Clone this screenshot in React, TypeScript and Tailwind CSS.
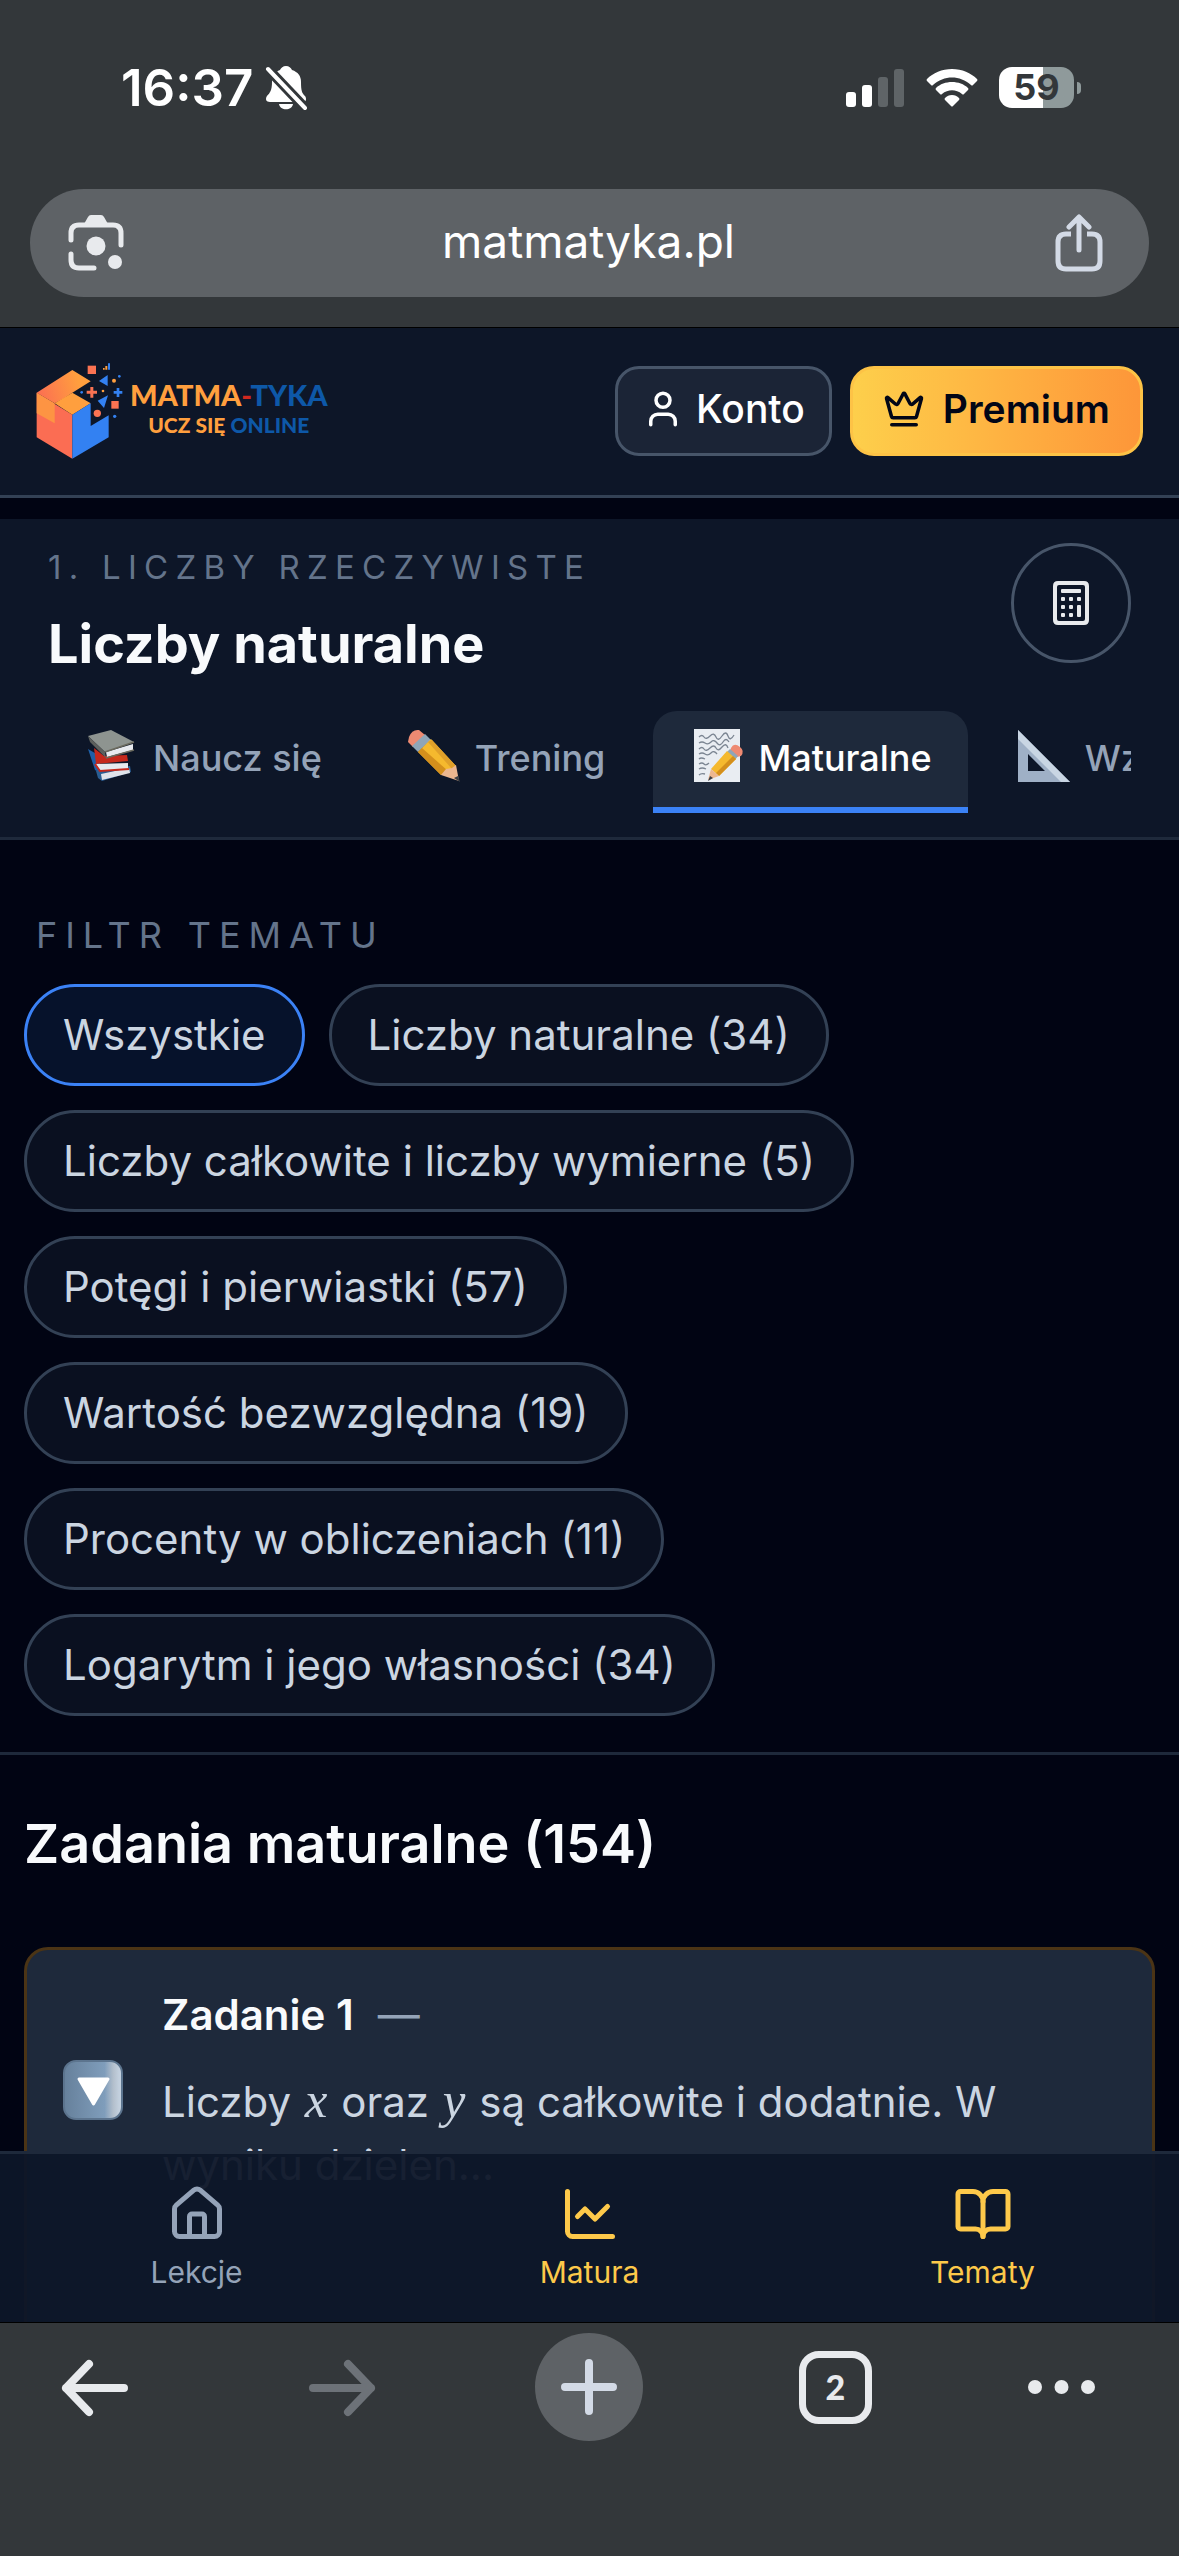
import { useState } from 'react';
import type { ReactNode } from 'react';
import { BookOpen, ChartLine, Crown, House, User } from 'lucide-react';

const FILTERS = [
  { label: 'Wszystkie' },
  { label: 'Liczby naturalne', count: 34 },
  { label: 'Liczby całkowite i liczby wymierne', count: 5 },
  { label: 'Potęgi i pierwiastki', count: 57 },
  { label: 'Wartość bezwzględna', count: 19 },
  { label: 'Procenty w obliczeniach', count: 11 },
  { label: 'Logarytm i jego własności', count: 34 },
];

const NAV_ITEMS = [
  { label: 'Lekcje', icon: House, highlighted: false },
  { label: 'Matura', icon: ChartLine, highlighted: true },
  { label: 'Tematy', icon: BookOpen, highlighted: true },
];

function BooksIcon() {
  return (
    <svg width="56" height="60" viewBox="0 0 56 60" aria-hidden="true" className="shrink-0">
      <path d="M4 21L16 28V45L11 42Z" fill="#1d5fa8" />
      <path d="M12 43L46 38L47 44L18 53L14 50Z" fill="#2a5d92" />
      <path d="M17 46L45 40L46 45L18 52Z" fill="#dfe3ea" />
      <path d="M10 20L20 28L43 27L44 33L12 36Z" fill="#c5281c" />
      <path d="M12 36L44 35V41L16 43Z" fill="#e6e9ee" />
      <path d="M11 36L16 43L45 41" stroke="#c5281c" strokeWidth="2" fill="none" />
      <path d="M4 8L27 2L50 14L21 24Z" fill="#8e9490" />
      <path d="M4 8L21 24L22 30L6 14Z" fill="#5d605d" />
      <path d="M22 24L49 16V22L23 29Z" fill="#e8eaee" />
      <path d="M21 24L50 14M22 30L50 22" stroke="#6b6a5e" strokeWidth="1.5" />
    </svg>
  );
}

function PencilIcon() {
  return (
    <svg width="56" height="60" viewBox="0 0 56 60" aria-hidden="true" className="shrink-0">
      <path d="M3 9Q6 1 13 2L19 7L7 19L2 14Z" fill="#ee8a72" />
      <path d="M19 6L25 12L12 24L6 18Z" fill="#8fa5b8" />
      <path d="M25 11L50 38L35 47L12 24Z" fill="#f5b92e" />
      <path d="M12 24L16 20L42 43L35 47Z" fill="#d48f1c" />
      <path d="M22 14L26 12L50 38L46 41Z" fill="#e0a02a" />
      <path d="M35 47L40 41L46 40L50 37L53 53Z" fill="#ecb790" />
      <path d="M48 50L52 48L54 54Z" fill="#3b3f45" />
    </svg>
  );
}

function MemoIcon() {
  return (
    <svg width="56" height="60" viewBox="0 0 56 60" aria-hidden="true" className="shrink-0">
      <rect x="5" y="1" width="46" height="53" fill="#e9edf2" />
      <path
        d="M10 9q3-3 5 0t6-1 6 1 6-1 6 0 6-1M10 15q3-2 6 0t6-1 6 1 6-1 6 0M10 21q3-3 5 0t6-1 6 0 6-1 6 1M10 26q3-2 6 0t6-1 6 1M10 31q2-2 6 0M10 36q3-2 5 0t5-1M10 41q3-2 7 0M10 47q2-2 6-1"
        stroke="#7b8592"
        strokeWidth="1.3"
        fill="none"
      />
      <path d="M42 20Q45 14 51 19Q56 23 52 28L48 29L41 23Z" fill="#ee8a72" />
      <path d="M41 21L49 28L46 32L38 24Z" fill="#8fa5b8" />
      <path d="M38 23L47 31L30 48L22 41Z" fill="#f5b92e" />
      <path d="M44 28L47 31L30 48L27 45Z" fill="#d48f1c" />
      <path d="M22 41L30 48L19 52Z" fill="#ecb790" />
      <path d="M21 48L24 50L19 53Z" fill="#3b3f45" />
    </svg>
  );
}

function SetSquareIcon() {
  return (
    <svg width="56" height="60" viewBox="0 0 56 60" aria-hidden="true" className="shrink-0">
      <path d="M2 2L54 54H2ZM12 26V43H29Z" fill="#9fb0c6" fillRule="evenodd" />
      <path d="M2 2L54 54H45L2 11Z" fill="#c9d6e4" />
    </svg>
  );
}

const TABS = [
  { label: 'Naucz się', icon: <BooksIcon /> },
  { label: 'Trening', icon: <PencilIcon /> },
  { label: 'Maturalne', icon: <MemoIcon /> },
  { label: 'Wzory', icon: <SetSquareIcon /> },
];

function StatusBar() {
  return (
    <div className="mb-[70px] flex h-[63px] items-center justify-between pr-[98px] pl-[121px] text-white">
      <div className="flex items-center gap-3">
        <span className="text-[51px] leading-[63px] font-semibold">16:37</span>
        <svg width="42" height="46" viewBox="0 0 42 46" fill="currentColor" aria-label="Wyciszony">
          <path d="M21 1c3 0 5 2 6 4 6 2 9 6 9 12 0 9 1 11 4 14 2 3 1 6-2 6H5c-4 0-5-3-3-6 3-3 5-6 5-14 0-6 3-10 8-12 1-2 3-4 6-4Z" />
          <path d="M14 39h14c-1 7-13 7-14 0Z" />
          <path d="M3 4L40 43" stroke="#33373a" strokeWidth="10" />
          <path d="M3 4L40 43" stroke="currentColor" strokeWidth="4" strokeLinecap="round" />
        </svg>
      </div>
      <div className="flex items-center">
        <svg width="58" height="38" viewBox="0 0 58 38" aria-label="Zasięg" className="mr-[22px]">
          <rect x="0" y="23" width="10" height="15" rx="3" fill="#fff" />
          <rect x="16" y="16" width="10" height="22" rx="3" fill="#fff" />
          <rect x="32" y="8" width="10" height="30" rx="3" fill="#5f6467" />
          <rect x="48" y="0" width="10" height="38" rx="3" fill="#5f6467" />
        </svg>
        <svg width="52" height="38" viewBox="0 0 52 38" fill="#fff" aria-label="Wi-Fi" className="mr-[21px]">
          <path d="M26 0C36 0 45 4 51 10Q52 11 51 12L47 16Q46 17 45 16C34 6 18 6 7 16Q6 17 5 16L1 12Q0 11 1 10C7 4 16 0 26 0Z" />
          <path d="M26 13C32 13 38 15 42 19Q43 20 42 21L38 25Q37 26 36 25C30 20 22 20 16 25Q15 26 14 25L10 21Q9 20 10 19C14 15 20 13 26 13Z" />
          <path d="M26 26C29 26 31 27 33 29Q34 30 33 31L27 37Q26 38 25 37L19 31Q18 30 19 29C21 27 23 26 26 26Z" />
        </svg>
        <span className="flex h-[41px] w-[75px] items-center justify-center rounded-[13px] bg-linear-to-r from-white from-59% to-[#8f9a9b] to-59% text-[36px] leading-[41px] font-bold text-[#33373a]">
          59
        </span>
        <span className="ml-[3px] h-3 w-1 rounded-r-full bg-[#8f9a9b]" />
      </div>
    </div>
  );
}

function AddressBar() {
  return (
    <div className="mx-[30px] flex h-[108px] items-center justify-between rounded-full bg-[#5e6266] px-[38px]">
      <button type="button" aria-label="Szukaj obrazem">
        <svg width="56" height="56" viewBox="0 0 56 56" fill="none" stroke="#e8eaed" strokeWidth="5" strokeLinecap="round">
          <path d="M3 25V18Q3 10 11 10H45Q53 10 53 18V30M3 39V45Q3 53 11 53H26" />
          <path d="M16 9L20 2Q21 0 23 0H33Q35 0 36 2L40 9Z" fill="#e8eaed" stroke="none" />
          <circle cx="28" cy="31" r="9.500" fill="#e8eaed" stroke="none" />
          <circle cx="47" cy="47" r="7" fill="#e8eaed" stroke="none" />
        </svg>
      </button>
      <span className="pb-1 text-[46px] leading-[60px] text-white">matmatyka.pl</span>
      <button type="button" aria-label="Udostępnij" className="mr-1.5">
        <svg width="52" height="58" viewBox="0 0 52 58" fill="none" stroke="#d3dae6" strokeWidth="5" strokeLinecap="round" strokeLinejoin="round">
          <path d="M18 20H13Q5 20 5 28V47Q5 55 13 55H39Q47 55 47 47V28Q47 20 39 20H34" strokeLinecap="butt" />
          <path d="M26 36V4M16 13L26 3L36 13" />
        </svg>
      </button>
    </div>
  );
}

function Logo() {
  return (
    <a href="/" className="flex items-center pb-1">
      <svg width="100" height="110" viewBox="30 15 300 330" aria-hidden="true">
        <defs>
          <linearGradient id="logo-top" x1="0" y1="0.600" x2="1" y2="0.400">
            <stop offset="0" stopColor="#fb6f52" />
            <stop offset="0.800" stopColor="#ff9f3e" />
          </linearGradient>
        </defs>
        <path d="M50 128L157 60L212 94L157 128L130 146L104 160Z" fill="url(#logo-top)" />
        <path d="M50 128L157 194V326L50 262Z" fill="#fb6d53" />
        <path d="M50 128L104 160V220L50 190Z" fill="#fd9443" />
        <path d="M104 160L157 128L212 160L157 194Z" fill="#ff9f3e" />
        <path d="M157 194L212 160V228L266 196V262L157 326Z" fill="#3381f2" />
        <g fill="#fb7352">
          <rect x="203" y="47" width="25" height="25" />
          <rect x="274" y="153" width="22" height="23" />
          <path d="M211 111h9v11h11v9h-11v12h-9v-12h-11v-9h11Z" />
          <circle cx="232" cy="190" r="11" />
        </g>
        <g fill="#3381f2">
          <path d="M237 93L263 75V108ZM233 152L264 136L252 174Z" />
          <path d="M290 114h8v9h9v8h-9v10h-8v-10h-9v-8h9Z" />
          <circle cx="185" cy="127" r="4" />
          <circle cx="284" cy="199" r="5" />
          <circle cx="298" cy="79" r="4" />
          <path d="M264 40h6v19h-6Z" />
        </g>
        <g fill="#ff9f3e">
          <circle cx="282" cy="92" r="6" />
          <circle cx="249" cy="123" r="4" />
          <path d="M256 48h6v11h-6ZM249 54h5v5h-5Z" />
        </g>
      </svg>
      <span className="flex flex-col items-center font-[Lato,sans-serif] leading-[30px] font-black text-[#ff9f3e]">
        <span className="text-[29px]">
          MATMA<span className="text-[#d0281f]">-</span>
          <span className="text-[#0d58a8]">TYKA</span>
        </span>
        <span className="text-[21px]">
          UCZ SIĘ <span className="text-[#0d58a8]">ONLINE</span>
        </span>
      </span>
    </a>
  );
}

function SiteHeader() {
  return (
    <header className="flex h-[170px] items-center justify-between border-b-[3px] border-[#334155] bg-[#0d1628] pr-9 pl-[30px]">
      <Logo />
      <div className="flex gap-[18px] pb-0.5 text-[39px] leading-[54px]">
        <button
          type="button"
          className="flex h-[90px] items-center gap-3 rounded-3xl border-[3px] border-[#475569] bg-[#1b2436] px-6 pb-[3px] font-medium text-white"
        >
          <User size={42} />
          Konto
        </button>
        <button
          type="button"
          className="flex h-[90px] items-center gap-[18px] rounded-3xl border-[3px] border-[#fdc346] bg-linear-to-r from-[#fdcf4b] to-[#fd9639] px-[30px] pb-[3px] font-semibold text-[#020617]"
        >
          <Crown size={42} />
          Premium
        </button>
      </div>
    </header>
  );
}

function CalculatorButton() {
  return (
    <button
      type="button"
      aria-label="Kalkulator"
      className="flex size-[120px] shrink-0 items-center justify-center rounded-full border-[3px] border-[#475569]"
    >
      <svg width="36" height="44" viewBox="0 0 36 44" fill="#e8eaed">
        <path d="M5 0H31Q36 0 36 5V39Q36 44 31 44H5Q0 44 0 39V5Q0 0 5 0ZM4 6V38Q4 40 6 40H30Q32 40 32 38V6Q32 4 30 4H6Q4 4 4 6Z" fillRule="evenodd" />
        <rect x="8" y="8" width="20" height="4" rx="1" />
        {[16, 24, 32].map((y) => (
          <g key={y}>
            <rect x="8" y={y} width="4" height="4" rx="1" />
            <rect x="16" y={y} width="4" height="4" rx="1" />
          </g>
        ))}
        <rect x="24" y="16" width="4" height="4" rx="1" />
        <rect x="24" y="24" width="4" height="12" rx="1" />
      </svg>
    </button>
  );
}

function LessonHeader() {
  const [activeTab, setActiveTab] = useState('Maturalne');

  return (
    <section className="mt-[21px] border-b-[3px] border-[#1e293b] bg-[#0d1628] px-12 py-6">
      <div className="flex items-start justify-between">
        <div>
          <p className="text-[33px] leading-[48px] tracking-[0.22em] text-[#64748b] uppercase">
            1. Liczby rzeczywiste
          </p>
          <h1 className="mt-3 text-[54px] leading-[81px] font-bold text-[#f8fafc]">Liczby naturalne</h1>
        </div>
        <CalculatorButton />
      </div>
      <div className="mt-[27px] flex gap-3 overflow-hidden">
        {TABS.map((tab) => (
          <button
            key={tab.label}
            type="button"
            onClick={() => setActiveTab(tab.label)}
            className={`flex h-[102px] shrink-0 items-center gap-[13px] rounded-t-3xl border-b-[6px] px-9 pb-0.5 text-[36px] leading-[54px] font-medium ${
              activeTab === tab.label
                ? 'border-[#3b82f6] bg-[#1e293b] text-white'
                : 'border-transparent text-[#94a3b8]'
            }`}
          >
            {tab.icon}
            {tab.label}
          </button>
        ))}
      </div>
    </section>
  );
}

function TopicFilter() {
  const [selected, setSelected] = useState('Wszystkie');

  return (
    <section className="border-b-[3px] border-[#1e293b] px-6 pt-[68px] pb-9">
      <h2 className="mb-[22px] pl-3 text-[36px] leading-[54px] tracking-[0.22em] text-[#64748b] uppercase">
        Filtr tematu
      </h2>
      <div className="flex flex-wrap gap-6">
        {FILTERS.map(({ label, count }) => (
          <button
            key={label}
            type="button"
            onClick={() => setSelected(label)}
            className={`h-[102px] rounded-full border-[3px] px-9 text-[42px] leading-[60px] text-[#cbd5e1] ${
              selected === label ? 'border-[#3b82f6] bg-[#06122b]' : 'border-[#334155] bg-[#0a1020]'
            }`}
          >
            {count ? `${label} (${count})` : label}
          </button>
        ))}
      </div>
    </section>
  );
}

function MathVar({ children }: { children: ReactNode }) {
  return (
    <i className="px-0.5 font-['Liberation_Serif',serif] text-[51px] leading-none">{children}</i>
  );
}

function TaskCard() {
  return (
    <article className="min-h-[420px] rounded-3xl border-[3px] border-[#4b3415] bg-[#1e293b]">
      <div className="flex items-center gap-[39px] px-9 pt-[33px] pb-[39px]">
        <button type="button" aria-label="Rozwiń zadanie" className="shrink-0">
          <svg width="60" height="60" viewBox="0 0 60 60">
            <defs>
              <linearGradient id="expand">
                <stop offset="0" stopColor="#66809b" />
                <stop offset="0.700" stopColor="#7f9dbb" />
                <stop offset="0.850" stopColor="#b3bfcc" />
                <stop offset="0.950" stopColor="#c3d0de" />
              </linearGradient>
            </defs>
            <rect x="1" y="1" width="58" height="58" rx="12" fill="url(#expand)" stroke="#5c748e" strokeWidth="2" />
            <path d="M16 19H45L30.500 44Z" fill="#fff" stroke="#fff" strokeWidth="3" strokeLinejoin="round" />
          </svg>
        </button>
        <div className="text-[42px] leading-[63px] text-[#cbd5e1]">
          <div className="flex gap-6">
            <h3 className="font-semibold text-[#f8fafc]">Zadanie 1</h3>
            <span className="text-[#94a3b8]">—</span>
          </div>
          <p className="mt-6">
            Liczby <MathVar>x</MathVar> oraz <MathVar>y</MathVar> są całkowite i dodatnie. W wyniku dzielen...
          </p>
        </div>
      </div>
    </article>
  );
}

function BottomNav() {
  return (
    <nav className="absolute inset-x-0 bottom-0 grid h-[171px] grid-cols-3 border-t-[3px] border-[#1e293b] bg-[#0d1628]/95">
      {NAV_ITEMS.map(({ label, icon: Icon, highlighted }) => (
        <a
          key={label}
          href="#"
          className={`flex flex-col items-center gap-1.5 pt-[30px] text-[30px] leading-[45px] ${
            highlighted ? 'text-[#fdc94a]' : 'text-[#94a3b8]'
          }`}
        >
          <Icon size={60} />
          {label}
        </a>
      ))}
    </nav>
  );
}

function BrowserToolbar() {
  return (
    <div className="flex h-[234px] shrink-0 items-start justify-between border-t border-black bg-[#33373a] pt-2.5 pr-[84px] pl-[41px] text-[#e8eaed]">
      <button type="button" aria-label="Wstecz" className="flex size-[108px] items-center justify-center">
        <svg width="68" height="62" viewBox="0 0 68 62" fill="none" stroke="currentColor" strokeWidth="8" strokeLinecap="round" strokeLinejoin="round">
          <path d="M63 32H5M28 8L5 32L28 56" />
        </svg>
      </button>
      <button type="button" aria-label="Dalej" disabled className="flex size-[108px] items-center justify-center text-[#6d7278]">
        <svg width="68" height="62" viewBox="0 0 68 62" fill="none" stroke="currentColor" strokeWidth="8" strokeLinecap="round" strokeLinejoin="round">
          <path d="M5 32H63M40 8L63 32L40 56" />
        </svg>
      </button>
      <button type="button" aria-label="Nowa karta" className="flex size-[108px] items-center justify-center rounded-full bg-[#5e6266]">
        <svg width="56" height="56" viewBox="0 0 56 56" stroke="#d3dae6" strokeWidth="8" strokeLinecap="round">
          <path d="M28 4V52M4 28H52" />
        </svg>
      </button>
      <button type="button" aria-label="Karty" className="flex size-[108px] items-center justify-center">
        <span className="flex size-[73px] items-center justify-center rounded-[20px] border-[7px] border-[#e8eaed] font-[Lato,sans-serif] text-[34px] leading-[40px] font-black">
          2
        </span>
      </button>
      <button type="button" aria-label="Więcej" className="flex h-[108px] items-center">
        <svg width="67" height="14" viewBox="0 0 67 14" fill="currentColor">
          <circle cx="7" cy="7" r="7" />
          <circle cx="33.500" cy="7" r="7" />
          <circle cx="60" cy="7" r="7" />
        </svg>
      </button>
    </div>
  );
}

export default function App() {
  return (
    <div className="flex h-screen flex-col bg-[#01040f] font-[Inter,sans-serif]">
      <div className="shrink-0 border-b border-black bg-[#33373a] pt-14 pb-[30px]">
        <StatusBar />
        <AddressBar />
      </div>
      <div className="relative min-h-0 flex-1 overflow-hidden bg-[#010413]">
        <SiteHeader />
        <main>
          <LessonHeader />
          <TopicFilter />
          <section className="px-6 pt-12">
            <h2 className="mb-[63px] text-[54px] leading-[81px] font-semibold text-[#f8fafc]">
              Zadania maturalne (154)
            </h2>
            <TaskCard />
          </section>
        </main>
        <BottomNav />
      </div>
      <BrowserToolbar />
    </div>
  );
}
